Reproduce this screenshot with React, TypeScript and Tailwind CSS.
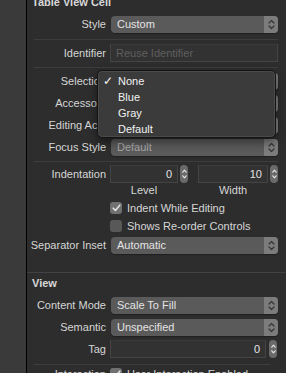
import { clsx as cn } from 'clsx'

function Chevrons({ small }: { small?: boolean }) {
  return (
    <svg width={small ? 5 : 7} height={small ? 12 : 11} viewBox={small ? '0 0 5 12' : '0 0 7 11'} fill="none" stroke="currentColor" strokeWidth="1.2" strokeLinecap="round" strokeLinejoin="round">
      {small ? (
        <>
          <path d="M0.8 4.2 L2.5 2.2 L4.2 4.2" />
          <path d="M0.8 7.8 L2.5 9.8 L4.2 7.8" />
        </>
      ) : (
        <>
          <path d="M1 4 L3.5 1.5 L6 4" />
          <path d="M1 7 L3.5 9.5 L6 7" />
        </>
      )}
    </svg>
  )
}

function Select({ value, dim }: { value: string; dim?: boolean }) {
  return (
    <div className="ml-px flex h-[17px] items-center overflow-hidden rounded-[4px] bg-[#5a5a5a] shadow-[0_1px_1px_rgba(0,0,0,0.3)]">
      <span className={cn('flex-1 truncate pl-[6px] leading-[17px]', dim ? 'text-[#a8a8a8]' : 'text-[#e4e4e4]')}>{value}</span>
      <span className="flex h-full w-[14px] items-center justify-center bg-[#7c7c7c] text-[#353535]">
        <Chevrons />
      </span>
    </div>
  )
}

function Stepper() {
  return (
    <div className="flex h-[18px] w-[8px] shrink-0 items-center justify-center rounded-full bg-[#6a6a6a] text-[#e2e2e2]">
      <Chevrons small />
    </div>
  )
}

function Field({ value, placeholder, className }: { value?: string; placeholder?: string; className?: string }) {
  return (
    <div className={cn('flex h-[18px] items-center border border-[#444] border-t-[#3a3a3a] bg-[#323232] px-[5px]', className)}>
      {placeholder ? (
        <span className="text-[#5f5f5f]">{placeholder}</span>
      ) : (
        <span className="ml-auto text-[#e4e4e4]">{value}</span>
      )}
    </div>
  )
}

function Check({ checked }: { checked?: boolean }) {
  return (
    <div className={cn('flex h-[12px] w-[12px] shrink-0 items-center justify-center rounded-[3px]', checked ? 'bg-[#707070]' : 'bg-[#585858]')}>
      {checked && (
        <svg width="9" height="8" viewBox="0 0 9 8" fill="none" stroke="#e0e0e0" strokeWidth="1.6" strokeLinecap="round" strokeLinejoin="round">
          <path d="M1.2 4.2 L3.4 6.4 L7.8 1.2" />
        </svg>
      )}
    </div>
  )
}

function Row({ label, h = 'h-[22px]', children }: { label?: string; h?: string; children?: React.ReactNode }) {
  return (
    <div className={cn('grid grid-cols-[79px_1fr] items-center gap-x-[4px] pr-[8px]', h)}>
      <span className="whitespace-nowrap text-right text-[#d6d6d6]">{label}</span>
      <div>{children}</div>
    </div>
  )
}

function Sep({ className }: { className?: string }) {
  return <div className={cn('ml-[7px] mr-[8px] h-px bg-[#3d3d3d]', className)} />
}

export default function App() {
  return (
    <div className="relative flex h-[373px] w-[286px] overflow-hidden bg-[#2d2d2d] font-['Liberation_Sans',Arial,sans-serif] text-[11px] leading-[13px]">
      <div className="w-[26px] shrink-0 bg-[#3a3a3a]" />
      <div className="w-px shrink-0 bg-black" />
      <div className="-mt-[8px] flex-1">
        <div className="flex h-[20px] items-center pl-[5px] font-bold text-[#d8d8d8]">Table View Cell</div>
        <Row label="Style" h="h-[24px]">
          <Select value="Custom" />
        </Row>
        <div className="h-[3px]" />
        <Sep />
        <Row label="Identifier" h="h-[26px]">
          <Field placeholder="Reuse Identifier" />
        </Row>
        <div className="h-px" />
        <Sep />
        <div className="h-[2px]" />
        <Row label="Selection">
          <Select value="None" />
        </Row>
        <Row label="Accessory">
          <Select value="None" />
        </Row>
        <Row label="Editing Acc.">
          <Select value="None" />
        </Row>
        <Row label="Focus Style">
          <Select value="Default" dim />
        </Row>
        <div className="h-[3px]" />
        <Sep />
        <Row label="Indentation" h="h-[24px]">
          <div className="flex items-center">
            <Field value="0" className="w-[68px]" />
            <div className="ml-[2px]">
              <Stepper />
            </div>
            <Field value="10" className="ml-[10px] w-[70px]" />
            <div className="ml-[2px]">
              <Stepper />
            </div>
          </div>
        </Row>
        <div className="grid h-[8px] grid-cols-[79px_1fr] gap-x-[4px] pr-[8px] leading-[8px] text-[#d6d6d6]">
          <span />
          <div className="flex">
            <span className="w-[68px] text-center">Level</span>
            <span className="ml-[20px] w-[70px] text-center">Width</span>
          </div>
        </div>
        <div className="h-[5px]" />
        <Row h="h-[18px]">
          <div className="flex items-center gap-[5px] text-[#d6d6d6]">
            <Check checked />
            <span>Indent While Editing</span>
          </div>
        </Row>
        <Row h="h-[18px]">
          <div className="flex items-center gap-[5px] text-[#d6d6d6]">
            <Check />
            <span>Shows Re-order Controls</span>
          </div>
        </Row>
        <Row label="Separator Inset" h="h-[20px]">
          <Select value="Automatic" />
        </Row>
        <div className="h-[17px]" />
        <div className="h-px bg-[#424242]" />
        <div className="flex h-[20px] items-center pl-[5px] font-bold text-[#d8d8d8]">View</div>
        <div className="h-px" />
        <Row label="Content Mode">
          <Select value="Scale To Fill" />
        </Row>
        <Row label="Semantic">
          <Select value="Unspecified" />
        </Row>
        <Row label="Tag">
          <div className="flex items-center">
            <Field value="0" className="flex-1" />
            <div className="ml-[3px] mr-px">
              <Stepper />
            </div>
          </div>
        </Row>
        <div className="h-[4px]" />
        <Sep className="mr-[16px]" />
        <Row label="Interaction" h="h-[18px]">
          <div className="flex items-center gap-[5px] text-[#d6d6d6]">
            <Check checked />
            <span>User Interaction Enabled</span>
          </div>
        </Row>
      </div>

      <div className="absolute left-[97px] top-[70px] h-[68px] w-[179px] rounded-[5px] border border-[#151515] bg-[#3b3b3b] pt-[2px] shadow-[0_4px_10px_rgba(0,0,0,0.45),inset_0_0_0_1px_rgba(255,255,255,0.08)]">
        {['None', 'Blue', 'Gray', 'Default'].map((item, i) => (
          <div key={item} className="flex h-[16px] items-center font-medium text-[#f2f2f2]">
            <span className="w-[20px] pl-[5px] text-[12px]">{i === 0 ? '✓' : ''}</span>
            <span>{item}</span>
          </div>
        ))}
      </div>
    </div>
  )
}
